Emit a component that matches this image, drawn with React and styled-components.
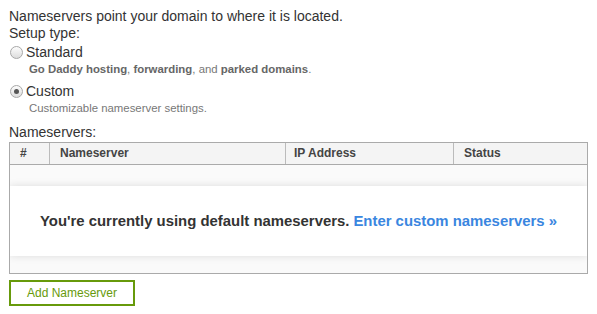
import React from 'react';
import styled, { createGlobalStyle } from 'styled-components';

const GlobalStyle = createGlobalStyle`
  body {
    margin: 0;
    background: #fff;
    font-family: "Liberation Sans", Arial, sans-serif;
    color: #333;
  }
`;

const Page = styled.div`
  padding: 8px 9px 0 9px;
  width: 579px;
  font-size: 14px;
  line-height: 17px;
`;

const Line = styled.div`
  color: #333;
`;

const Option = styled.div`
  margin-top: ${(p) => p.$top}px;
`;

const OptionRow = styled.label`
  display: flex;
  align-items: center;
  gap: 3px;
  height: 18px;
  color: #333;
`;

const Radio = styled.span`
  width: 11px;
  height: 11px;
  margin-left: 1px;
  border-radius: 50%;
  border: 1px solid #a8a8a8;
  background: linear-gradient(#fdfdfd, #dcdcdc);
  display: flex;
  align-items: center;
  justify-content: center;
  &::after {
    content: '';
    width: 5px;
    height: 5px;
    border-radius: 50%;
    background: ${(p) => (p.$checked ? '#555' : 'transparent')};
  }
`;

const Hint = styled.div`
  margin: 1px 0 0 20px;
  font-size: 11.4px;
  line-height: 14px;
  color: #777;
  b {
    color: #666;
  }
`;

const Heading = styled.div`
  margin-top: 9px;
  color: #333;
`;

const Table = styled.div`
  margin-top: 1px;
  border: 1px solid #aaa;
  overflow: hidden;
`;

const HeadRow = styled.div`
  display: grid;
  grid-template-columns: 39px 236px 168px 1fr;
  height: 21px;
  background: #f4f4f4;
  border-bottom: 1px solid #aaa;
`;

const HeadCell = styled.div`
  display: flex;
  align-items: center;
  padding-left: ${(p) => p.$pad}px;
  font-size: 12px;
  font-weight: bold;
  color: #444;
  border-left: ${(p) => (p.$first ? 'none' : '1px solid #bbb')};
`;

const EmptyRow = styled.div`
  height: ${(p) => p.$h}px;
  background: #fafafa;
`;

const Message = styled.div`
  position: relative;
  z-index: 1;
  height: 70px;
  background: #fff;
  box-shadow: 0 0 8px rgba(0, 0, 0, 0.12);
  display: flex;
  align-items: center;
  justify-content: center;
  font-size: 14.9px;
  font-weight: bold;
  color: #333;
  padding-top: 1px;
  box-sizing: border-box;
`;

const Link = styled.a`
  margin-left: 4px;
  color: #3a86e0;
  text-decoration: none;
`;

const Button = styled.button`
  margin-top: 6px;
  width: 126px;
  height: 26px;
  border: 2px solid #679a0b;
  background: #fff;
  color: #679a0b;
  font-family: "Liberation Sans", Arial, sans-serif;
  font-size: 12px;
  padding: 0;
`;

export default function App() {
  return (
    <>
      <GlobalStyle />
      <Page>
        <Line>Nameservers point your domain to where it is located.</Line>
        <Line>Setup type:</Line>
        <Option $top={1}>
          <OptionRow>
            <Radio />
            Standard
          </OptionRow>
          <Hint>
            <b>Go Daddy hosting</b>, <b>forwarding</b>, and <b>parked domains</b>.
          </Hint>
        </Option>
        <Option $top={6}>
          <OptionRow>
            <Radio $checked />
            Custom
          </OptionRow>
          <Hint>Customizable nameserver settings.</Hint>
        </Option>
        <Heading>Nameservers:</Heading>
        <Table>
          <HeadRow>
            <HeadCell $first $pad={10}>#</HeadCell>
            <HeadCell $pad={10}>Nameserver</HeadCell>
            <HeadCell $pad={8}>IP Address</HeadCell>
            <HeadCell $pad={10}>Status</HeadCell>
          </HeadRow>
          <EmptyRow $h={21} />
          <Message>
            You're currently using default nameservers.
            <Link href="#">Enter custom nameservers »</Link>
          </Message>
          <EmptyRow $h={17} />
        </Table>
        <Button>Add Nameserver</Button>
      </Page>
    </>
  );
}
